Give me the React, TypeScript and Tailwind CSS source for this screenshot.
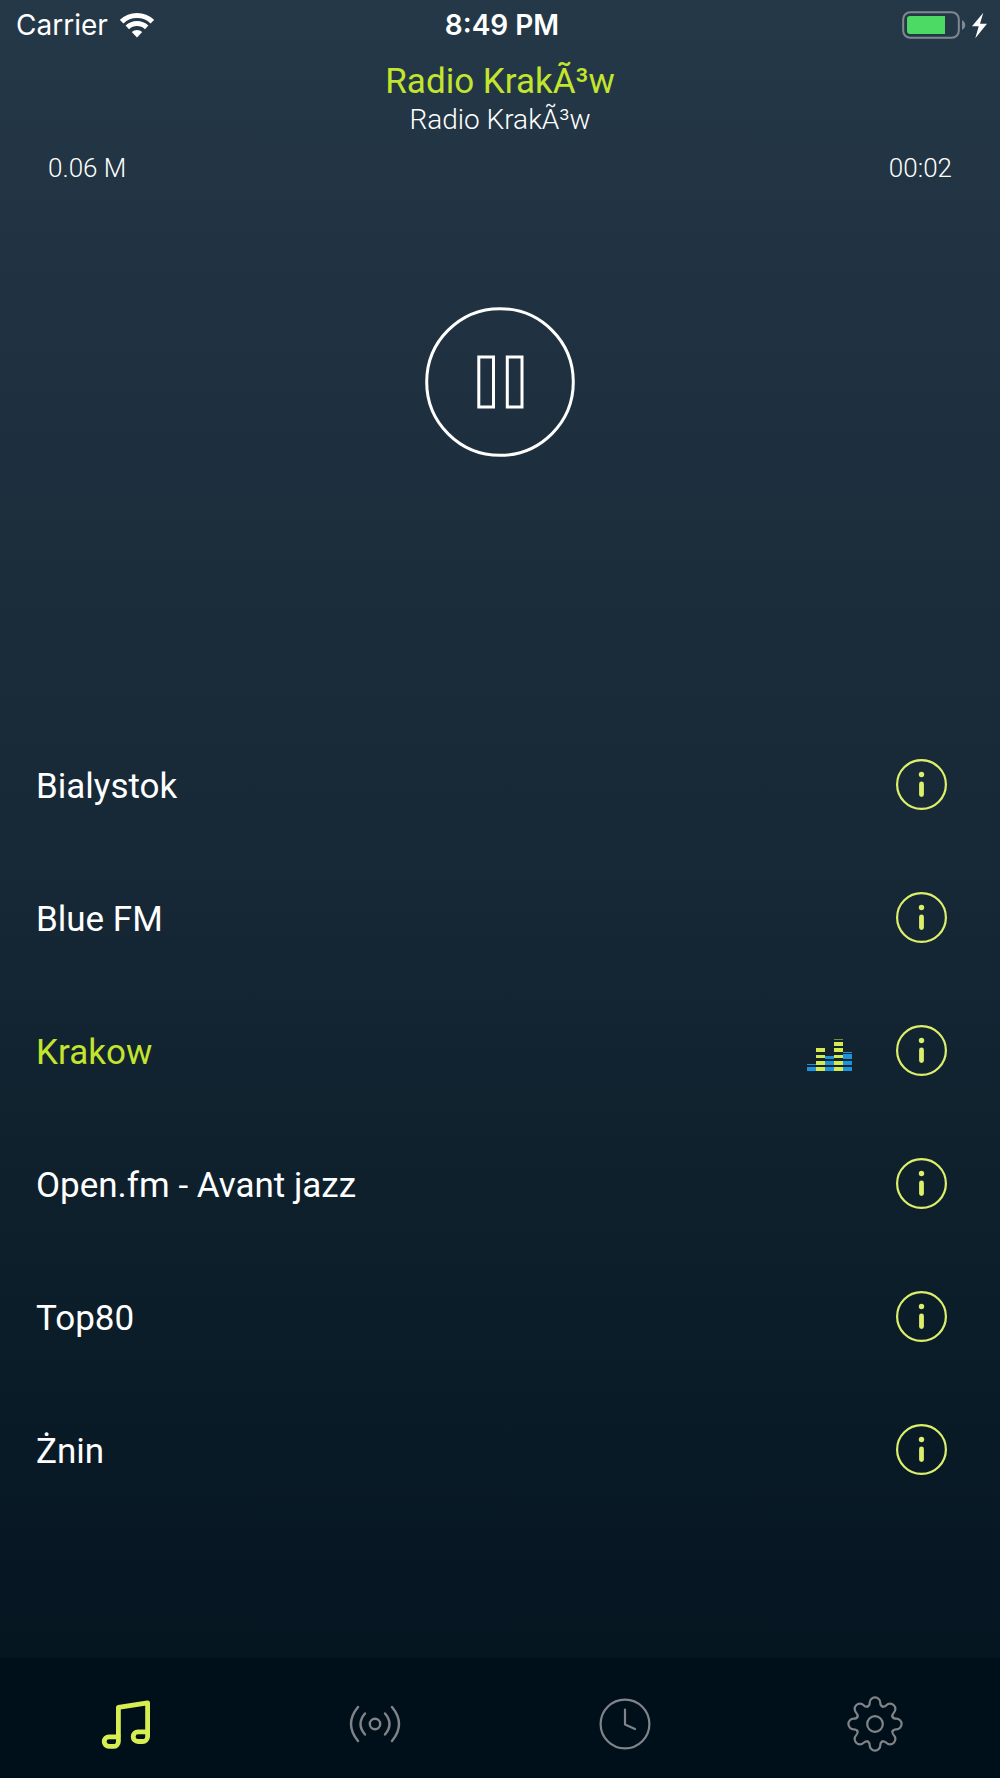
import React from "react";

const stations = [
    { name: "Bialystok" },
    { name: "Blue FM" },
    { name: "Krakow", playing: true },
    { name: "Open.fm - Avant jazz" },
    { name: "Top80" },
    { name: "Żnin" },
];

// one tooth of the gear, repeated every 45 degrees
const TOOTH = "M-7.3 -17.5C-5.4 -18.3 -5.3 -19.5 -5.3 -21.3A5.3 5.3 0 0 1 5.3 -21.3C5.3 -19.5 5.4 -18.3 7.3 -17.5";
const TEETH = [0, 45, 90, 135, 180, 225, 270, 315];

// x, y, height and colour of every equalizer segment
const BLUE = "#1b94dc";
const LIME = "#d6ea4e";
const SEGMENTS: [number, number, number, string][] = [
    [0, 28, 4, BLUE], [0, 25, 1, BLUE],
    [9, 28, 4, LIME], [9, 22, 4, LIME], [9, 16, 3, LIME], [9, 9, 4, LIME],
    [18, 28, 4, BLUE], [18, 22, 4, BLUE], [18, 17, 3, BLUE],
    [27, 28, 4, LIME], [27, 22, 4, LIME], [27, 16, 3, LIME], [27, 9, 4, LIME], [27, 3, 4, LIME], [27, 0, 1, "#7d8b3c"],
    [36, 28, 4, BLUE], [36, 22, 4, BLUE], [36, 15, 5, BLUE], [36, 13, 1, BLUE],
];

function WifiIcon() {
    return (
        <svg width="34" height="25" viewBox="0 0 34 25" fill="none" stroke="white" strokeWidth="5" aria-hidden="true">
            <path d="M1.7 8.7A22 22 0 0 1 32.3 8.7" />
            <path d="M7.3 14.4A14 14 0 0 1 26.7 14.4" />
            <path d="M17 24.5L11.8 19.1A7.5 7.5 0 0 1 22.2 19.1Z" fill="white" stroke="none" />
        </svg>
    );
}

function BatteryIcon() {
    return (
        <svg width="86" height="28" viewBox="0 0 86 28" aria-hidden="true">
            <rect x="1.2" y="1.2" width="55.6" height="25.6" rx="7" fill="none" stroke="#7f8991" strokeWidth="2" />
            <path d="M8 5H43V23H8A3 3 0 0 1 5 20V8A3 3 0 0 1 8 5Z" fill="#4cd964" />
            <path d="M60 9C62 10 63.3 12 63.3 14S62 18 60 19Z" fill="#7f8991" />
            <path d="M81.3 1.7L70 15.3H76.7L73.3 27.3L85 12.7H78Z" fill="white" />
        </svg>
    );
}

function PauseIcon() {
    return (
        <svg width="150" height="150" viewBox="0 0 150 150" fill="none" stroke="white" strokeWidth="3" aria-hidden="true">
            <circle cx="75" cy="75" r="73.3" />
            <rect x="53.8" y="50" width="14.7" height="50" />
            <rect x="82.3" y="50" width="14.7" height="50" />
        </svg>
    );
}

function EqualizerIcon() {
    return (
        <svg width="45" height="32" viewBox="0 0 45 32" shapeRendering="crispEdges" aria-hidden="true">
            {SEGMENTS.map(([x, y, h, color]) => (
                <rect key={`${x}-${y}`} x={x} y={y} width="9" height={h} fill={color} />
            ))}
        </svg>
    );
}

function InfoIcon() {
    return (
        <svg width="51" height="51" viewBox="0 0 51 51" aria-hidden="true">
            <circle cx="25.5" cy="25.5" r="24.4" fill="none" stroke="#dcef6b" strokeWidth="2.2" />
            <circle cx="25.5" cy="15.5" r="2.7" fill="#dcef6b" />
            <rect x="23.1" y="22.5" width="4.8" height="15.4" rx="2.4" fill="#dcef6b" />
        </svg>
    );
}

function MusicIcon() {
    return (
        <svg width="52" height="52" viewBox="19 28 52 52" fill="none" stroke="#d6ee52" strokeWidth="4.8" strokeLinejoin="round" aria-hidden="true">
            <path d="M38.4 66.7V37.4L67.6 32.8V66.5A5 5 0 0 1 62.6 71.5H58A4.8 4.8 0 0 1 58 61.9H67.6" />
            <path d="M38.4 66.8H29A4.8 4.8 0 0 0 29 76.4H33.4A5 5 0 0 0 38.4 71.4Z" />
        </svg>
    );
}

function BroadcastIcon() {
    return (
        <svg width="56" height="56" viewBox="-28 -28 56 56" fill="none" stroke="#808488" strokeWidth="2.4" strokeLinecap="round" aria-hidden="true">
            <circle r="5.2" />
            <path d="M-10 -10.5Q-19 0 -10 10.5M10 -10.5Q19 0 10 10.5" />
            <path d="M-17 -17Q-31 0 -17 17M17 -17Q31 0 17 17" />
        </svg>
    );
}

function ClockIcon() {
    return (
        <svg width="56" height="56" viewBox="-28 -28 56 56" fill="none" stroke="#808488" strokeWidth="2.2" strokeLinecap="round" strokeLinejoin="round" aria-hidden="true">
            <circle r="24.4" />
            <path d="M0 -14.5V0.5L10 5" />
        </svg>
    );
}

function GearIcon() {
    return (
        <svg width="56" height="56" viewBox="-28 -28 56 56" fill="none" stroke="#808488" strokeWidth="2.2" strokeLinecap="round" aria-hidden="true">
            {TEETH.map((angle) => (
                <path key={angle} d={TOOTH} transform={`rotate(${angle})`} />
            ))}
            <circle r="7.8" />
        </svg>
    );
}

const tabs = [
    { label: "Stations", href: "#stations", icon: <MusicIcon /> },
    { label: "Streams", href: "#streams", icon: <BroadcastIcon /> },
    { label: "History", href: "#history", icon: <ClockIcon /> },
    { label: "Settings", href: "#settings", icon: <GearIcon /> },
];

export default function App() {
    return (
        <div className="flex flex-col min-h-screen bg-linear-to-b from-[#253847] via-[#162735] to-[#03131e] text-white font-['Roboto',sans-serif]">
            <div className="grid grid-cols-[1fr_auto_1fr] items-center h-12 pl-4 pr-3 pt-0.5 text-[28px] leading-8 font-['Inter',sans-serif]">
                <div className="flex items-center gap-3">
                    <span>Carrier</span>
                    <WifiIcon />
                </div>
                <span className="font-semibold">8:49 PM</span>
                <div className="flex justify-end">
                    <BatteryIcon />
                </div>
            </div>

            <header className="text-center pt-3.5">
                <h1 className="text-[35px] leading-10 text-[#c3e52d]">Radio KrakÃ³w</h1>
                <p className="text-[28px] leading-9 font-light">Radio KrakÃ³w</p>
            </header>

            <div className="flex justify-between px-12 pt-3.5 text-[26px] leading-8 font-light">
                <span>0.06 M</span>
                <span>00:02</span>
            </div>

            <div className="flex justify-center pt-[123px] pb-[261px]">
                <button type="button" aria-label="Pause" className="rounded-full">
                    <PauseIcon />
                </button>
            </div>

            <ul>
                {stations.map((station) => (
                    <li key={station.name} className="flex items-center h-[133px] pl-9 pr-[53px]">
                        <button
                            type="button"
                            className={station.playing ? "flex-1 pt-1 text-left text-[35px] leading-10 text-[#c3e52d]" : "flex-1 pt-1 text-left text-[35px] leading-10"}
                        >
                            {station.name}
                        </button>
                        {station.playing && (
                            <div className="pr-11 pt-2">
                                <EqualizerIcon />
                            </div>
                        )}
                        <button type="button" aria-label={`About ${station.name}`}>
                            <InfoIcon />
                        </button>
                    </li>
                ))}
            </ul>

            <nav className="grid grid-cols-4 h-[120px] mt-auto pt-3 bg-[#00101b]">
                {tabs.map((tab) => (
                    <a key={tab.label} href={tab.href} aria-label={tab.label} className="flex items-center justify-center">
                        {tab.icon}
                    </a>
                ))}
            </nav>
        </div>
    );
}
